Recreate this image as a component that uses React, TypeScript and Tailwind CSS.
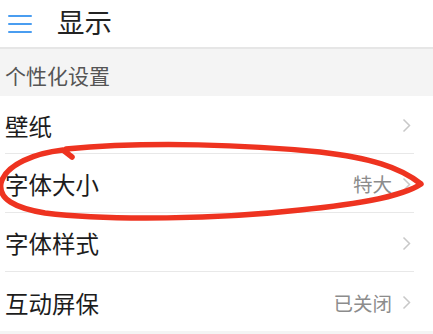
import React from 'react';

const rows: { label: string; value?: string }[] = [
  { label: '壁纸' },
  { label: '字体大小', value: '特大' },
  { label: '字体样式' },
  { label: '互动屏保', value: '已关闭' },
];

function Chevron() {
  return (
    <svg width="9" height="15" viewBox="0 0 9 15" className="shrink-0">
      <polyline points="1.5,1.5 7.5,7.5 1.5,13.5" fill="none" stroke="#c8c8c8" strokeWidth="1.5" />
    </svg>
  );
}

export default function App() {
  return (
    <div
      className="relative w-[433px] h-[334px] overflow-hidden bg-white"
      style={{ fontFamily: '"Noto Sans CJK SC", "Noto Sans", sans-serif' }}
    >
      {/* 顶栏 */}
      <div className="flex items-center h-[49px] border-b-2 border-[#e6e6e6]">
        <div className="ml-[8px] flex flex-col gap-[6px] w-[24px]">
          <div className="h-[2px] bg-[#4a9df0] rounded-full" />
          <div className="h-[2px] bg-[#4a9df0] rounded-full" />
          <div className="h-[2px] bg-[#4a9df0] rounded-full" />
        </div>
        <div className="ml-[25px] text-[27.5px] leading-none text-[#222] pb-[3px]">显示</div>
      </div>

      {/* 分组标题 */}
      <div className="h-[47px] bg-[#f4f4f4] flex items-center pl-[5px] pt-[6px] text-[21px] text-[#555] leading-none">
        个性化设置
      </div>

      {/* 设置项 */}
      <div className="flex flex-col">
        {rows.map((r, i) => (
          <div
            key={r.label}
            className={`ml-[5px] mr-[19px] flex items-center justify-between ${
              i === 0 ? 'h-[58px]' : 'h-[59px]'
            } ${i < rows.length - 1 ? 'border-b border-[#e8e8e8]' : ''}`}
          >
            <span className="text-[23.5px] leading-none text-[#1c1c1c] pt-[4px]">{r.label}</span>
            <div className="flex items-center gap-[10px] pr-[3px] pt-[2px]">
              {r.value && <span className="text-[19.5px] leading-none text-[#8c8c8c]">{r.value}</span>}
              <Chevron />
            </div>
          </div>
        ))}
      </div>
      <div className="h-[10px] bg-[#f4f4f4]" />

      {/* 红色手绘圈 */}
      <svg className="absolute left-0 top-0 pointer-events-none" width="433" height="334" viewBox="0 0 433 334">
        <path
          d="M 72 157 L 63 150 C 36 153, 6 164, 1 183 C -2 199, 15 208, 45 213 C 110 221, 220 219, 300 210 C 350 205, 400 198, 421 184 C 400 167, 370 158, 320 152 C 250 145, 150 141, 66 149"
          fill="none"
          stroke="#ee3320"
          strokeWidth="5.5"
          strokeLinecap="round"
          strokeLinejoin="round"
        />
      </svg>
    </div>
  );
}
